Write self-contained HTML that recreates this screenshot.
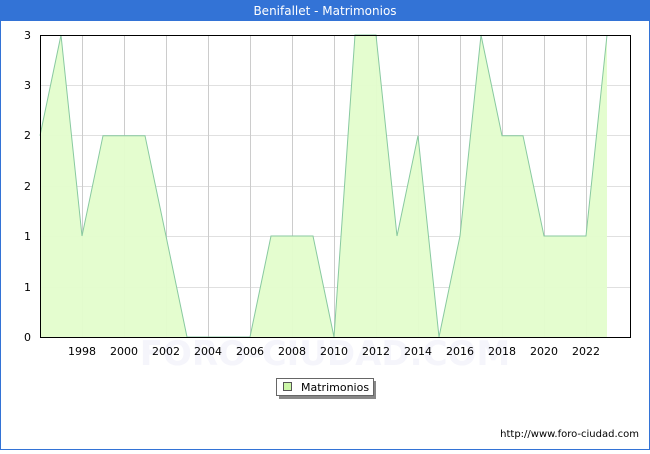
<!DOCTYPE html><html><head><style>body{margin:0;width:650px;height:450px;overflow:hidden;background:#fff;font-family:"DejaVu Sans","Liberation Sans",sans-serif}</style></head><body>
<svg width="650" height="450" xmlns="http://www.w3.org/2000/svg" font-family="DejaVu Sans, Liberation Sans, sans-serif">
<rect x="0.5" y="0.5" width="649" height="449" fill="#fff" stroke="#3373d6"/>
<rect x="0" y="0" width="650" height="21" fill="#3373d6"/>
<text x="325" y="15" fill="#fff" font-size="12" text-anchor="middle">Benifallet - Matrimonios</text>
<text x="325" y="365" fill="#f5f5fb" font-size="34" text-anchor="middle" font-weight="bold">FORO-CIUDAD.COM</text>
<g stroke="#e0e0e0"><line x1="40" x2="630" y1="85.5" y2="85.5"/><line x1="40" x2="630" y1="135.5" y2="135.5"/><line x1="40" x2="630" y1="186.5" y2="186.5"/><line x1="40" x2="630" y1="236.5" y2="236.5"/><line x1="40" x2="630" y1="287.5" y2="287.5"/></g>
<g stroke="#cccccc"><line x1="82.5" x2="82.5" y1="35" y2="337"/><line x1="124.5" x2="124.5" y1="35" y2="337"/><line x1="166.5" x2="166.5" y1="35" y2="337"/><line x1="208.5" x2="208.5" y1="35" y2="337"/><line x1="250.5" x2="250.5" y1="35" y2="337"/><line x1="292.5" x2="292.5" y1="35" y2="337"/><line x1="334.5" x2="334.5" y1="35" y2="337"/><line x1="376.5" x2="376.5" y1="35" y2="337"/><line x1="418.5" x2="418.5" y1="35" y2="337"/><line x1="460.5" x2="460.5" y1="35" y2="337"/><line x1="502.5" x2="502.5" y1="35" y2="337"/><line x1="544.5" x2="544.5" y1="35" y2="337"/><line x1="586.5" x2="586.5" y1="35" y2="337"/></g>
<polygon points="40,337 40,135.7 61,35 82,236 103,135.7 124,135.7 145,135.7 166,236 187,337 250,337 271,236 313,236 334,337 355,35 376,35 397,236 418,135.7 439,337 460,236 481,35 502,135.7 523,135.7 544,236 586,236 607,35 607,337" fill="#e3fdcc" fill-opacity="0.95"/>
<polyline points="40,135.7 61,35 82,236 103,135.7 124,135.7 145,135.7 166,236 187,337 250,337 271,236 313,236 334,337 355,35 376,35 397,236 418,135.7 439,337 460,236 481,35 502,135.7 523,135.7 544,236 586,236 607,35" fill="none" stroke="#88c9a0" stroke-width="1"/>
<rect x="40.5" y="35.5" width="590" height="302" fill="none" stroke="#000"/>
<g font-size="11" fill="#000" text-anchor="end"><text x="31" y="341">0</text><text x="31" y="291">1</text><text x="31" y="240">1</text><text x="31" y="190">2</text><text x="31" y="139">2</text><text x="31" y="89">3</text><text x="31" y="39">3</text></g>
<g font-size="11" fill="#000" text-anchor="middle"><text x="82" y="355">1998</text><text x="124" y="355">2000</text><text x="166" y="355">2002</text><text x="208" y="355">2004</text><text x="250" y="355">2006</text><text x="292" y="355">2008</text><text x="334" y="355">2010</text><text x="376" y="355">2012</text><text x="418" y="355">2014</text><text x="460" y="355">2016</text><text x="502" y="355">2018</text><text x="544" y="355">2020</text><text x="586" y="355">2022</text></g>
<rect x="279" y="381" width="97" height="18" fill="#888"/>
<rect x="276.5" y="378.5" width="97" height="17" fill="#fff" stroke="#666"/>
<rect x="283.5" y="382.5" width="8" height="8" fill="#ccf7a8" stroke="#555"/>
<text x="301" y="391" font-size="11" fill="#000">Matrimonios</text>
<text x="639" y="437" font-size="10" fill="#000" text-anchor="end">http://www.foro-ciudad.com</text>
</svg></body></html>
